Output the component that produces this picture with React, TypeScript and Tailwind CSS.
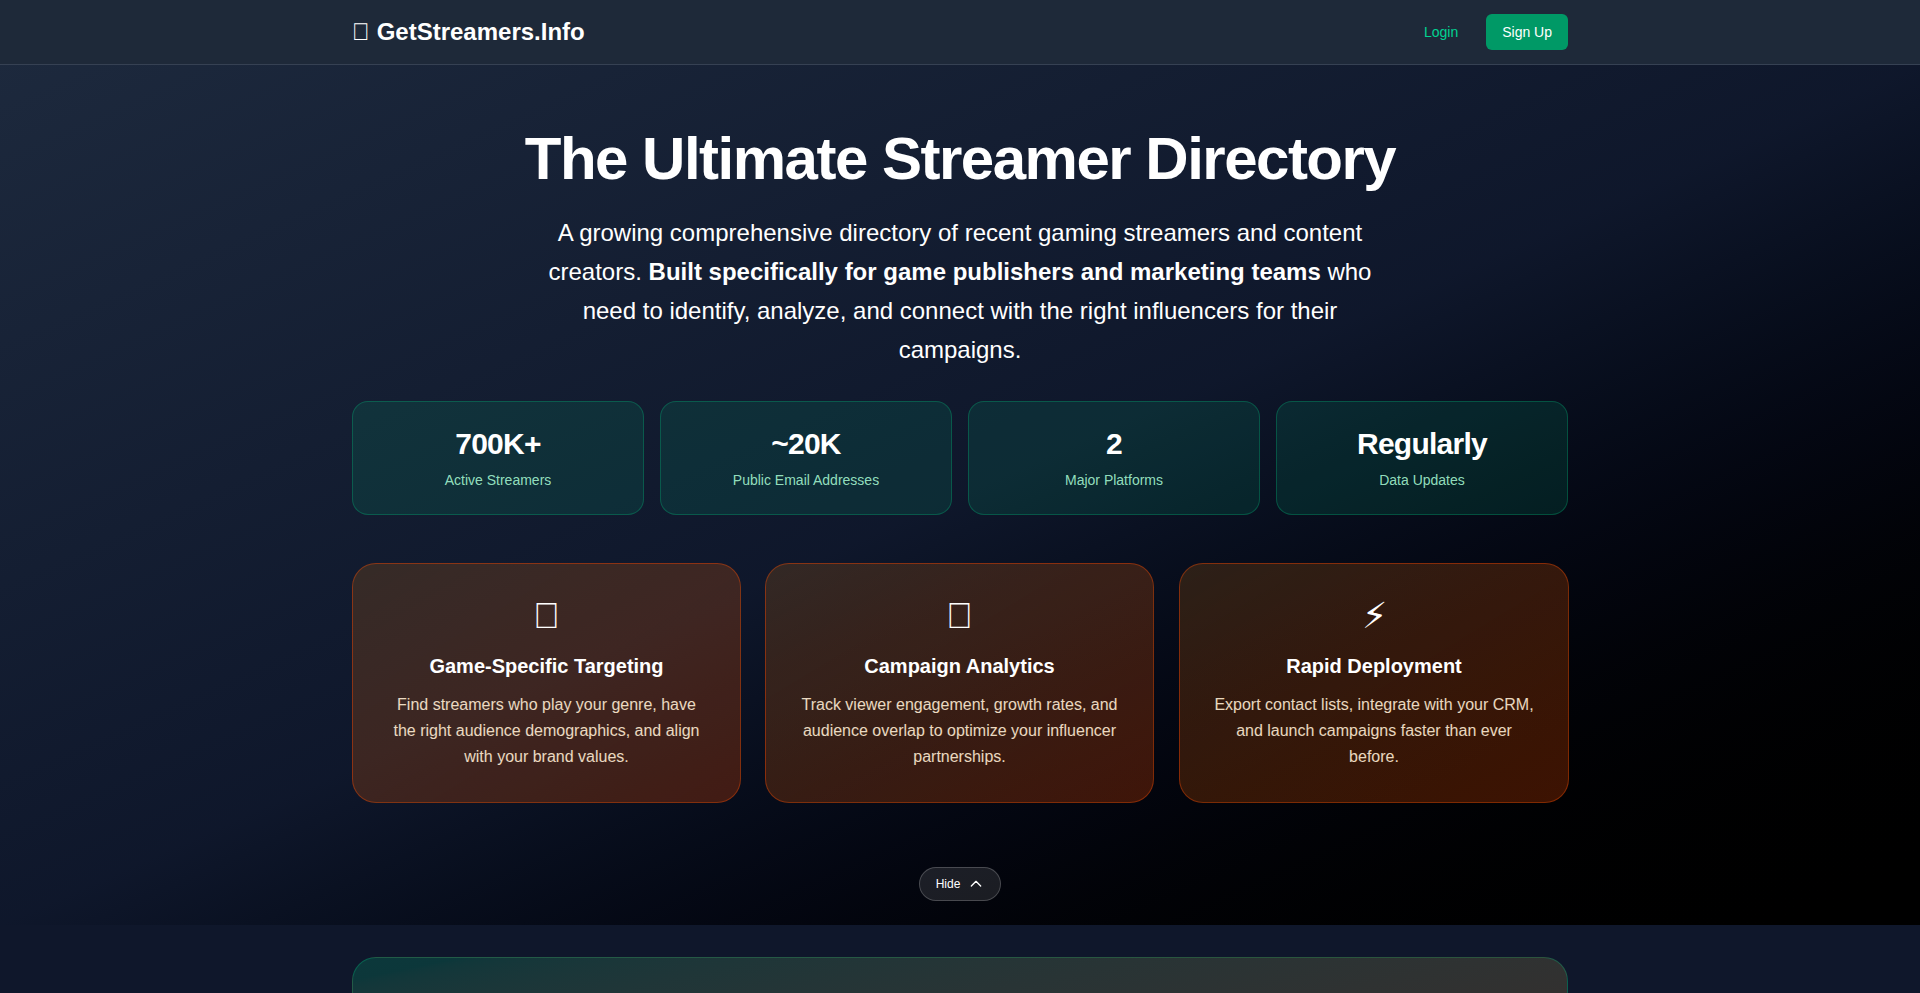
const stats = [
  ["700K+", "Active Streamers"],
  ["~20K", "Public Email Addresses"],
  ["2", "Major Platforms"],
  ["Regularly", "Data Updates"],
];

const features = [
  ["\u{10FFFD}", "Game-Specific Targeting", "Find streamers who play your genre, have the right audience demographics, and align with your brand values.", ""],
  ["\u{10FFFD}", "Campaign Analytics", "Track viewer engagement, growth rates, and audience overlap to optimize your influencer partnerships.", ""],
  ["\u26A1\uFE0E", "Rapid Deployment", "Export contact lists, integrate with your CRM, and launch campaigns faster than ever before.", "ml-px"],
];

export default function App() {
  return (
    <div className="h-screen overflow-hidden bg-slate-900 font-['Liberation_Sans',Arial,sans-serif] text-white">
      <header className="border-b border-gray-700 bg-gray-800">
        <div className="mx-auto flex h-16 max-w-[1280px] items-center justify-between px-8">
          <div className="text-2xl font-bold">{"\u{10FFFD}"} GetStreamers.Info</div>
          <div className="flex items-center gap-4">
            <a className="px-3 py-2 text-sm text-emerald-400">Login</a>
            <button className="rounded-md bg-emerald-600 px-4 py-2 text-sm text-white">Sign Up</button>
          </div>
        </div>
      </header>

      <section className="bg-gradient-to-br from-slate-800 via-slate-900 to-black pb-6 pt-16">
        <div className="mx-auto max-w-[1280px] px-8">
          <div className="text-center">
            <h1 className="mb-6 text-6xl font-bold tracking-tight">The Ultimate Streamer Directory</h1>
            <p className="mx-auto mb-8 max-w-4xl px-4 text-2xl leading-relaxed">
              A growing comprehensive directory of recent gaming streamers and content creators.{" "}
              <strong className="font-bold">Built specifically for game publishers and marketing teams</strong> who need to identify, analyze, and connect with the right influencers for their campaigns.
            </p>
          </div>

          <div className="mb-12 grid grid-cols-4 gap-4">
            {stats.map(([value, label]) => (
              <div key={label} className="rounded-2xl border border-emerald-500/30 bg-emerald-500/[0.13] p-6 text-center">
                <div className="mb-2 text-3xl font-bold tracking-tight">{value}</div>
                <div className="text-sm text-emerald-200/90">{label}</div>
              </div>
            ))}
          </div>

          <div className="-mr-px mb-16 grid grid-cols-[389px_389px_1fr] gap-6">
            {features.map(([icon, title, text, shift]) => (
              <div key={title} className={`rounded-3xl border border-orange-600/40 bg-gradient-to-br from-orange-400/15 to-orange-600/25 p-8 text-center ${shift}`}>
                <div className="mb-4 text-4xl leading-10">{icon}</div>
                <h3 className="mb-3 text-xl font-bold">{title}</h3>
                <p className="leading-relaxed text-orange-100/90">{text}</p>
              </div>
            ))}
          </div>

          <div className="flex justify-center">
            <button className="flex items-center gap-2 rounded-full border border-white/20 bg-white/10 px-4 py-2 text-xs text-white">
              Hide
              <svg className="h-4 w-4" fill="none" stroke="currentColor" strokeWidth={2} strokeLinecap="round" strokeLinejoin="round" viewBox="0 0 24 24">
                <path d="M5 15l7-7 7 7" />
              </svg>
            </button>
          </div>
        </div>
      </section>

      <section className="pt-8">
        <div className="mx-auto max-w-[1280px] px-8">
          <div className="h-64 rounded-3xl border border-emerald-500/30 bg-gradient-to-br from-emerald-500/20 to-orange-500/20" />
        </div>
      </section>
    </div>
  );
}
